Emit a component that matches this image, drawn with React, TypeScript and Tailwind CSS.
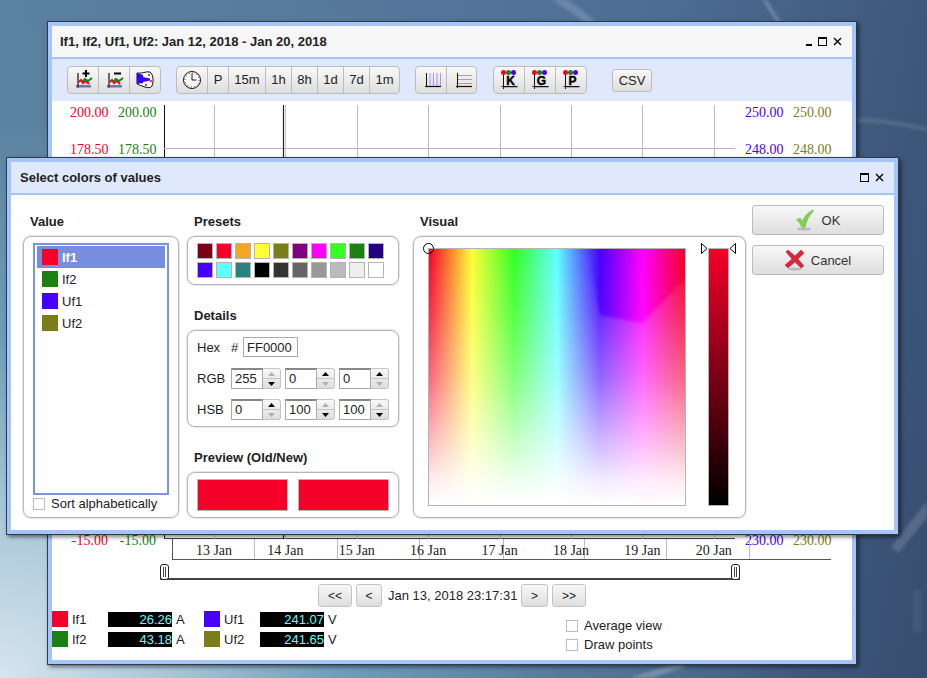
import type { ReactNode } from "react";

const RED = "#f40028";
const GREEN = "#1a8012";
const BLUE = "#4700ff";
const OLIVE = "#7b7e18";

const BTN_BG = "bg-[linear-gradient(#f8f8f8,#dedede)]";

const PRESETS = [
  "#7a0018", "#f40028", "#f5a623", "#ffff33", "#7b7e18", "#800080", "#ff00ff", "#33ff22", "#1a8012", "#240082",
  "#4700ff", "#5fffff", "#2b8080", "#000000", "#333333", "#666666", "#999999", "#bbbbbb", "#eeeeee", "#ffffff",
];

const GRID_X = [50, 193, 264, 336, 407, 478, 550];
const TICKS_X = [82, 165, 247, 331, 412, 494, 577];
const DATES = ["13 Jan", "14 Jan", "15 Jan", "16 Jan", "17 Jan", "18 Jan", "19 Jan", "20 Jan"];

function Axes() {
  return <path d="M5 3v15M3 16h15" stroke="#111" strokeWidth="1.2" fill="none" />;
}

function Zigzag() {
  return (
    <>
      <path d="M3 17h15" stroke="#7a5cff" strokeWidth="1" />
      <path d="M6 12l2-2 2 3 3-2 3 3" stroke={RED} strokeWidth="2" fill="none" />
      <path d="M9 12l3-3 3 2 4-3" stroke={GREEN} strokeWidth="2" fill="none" />
    </>
  );
}

function Icon({ children }: { children: ReactNode }) {
  return (
    <svg width="20" height="20" viewBox="0 0 20 20">
      {children}
    </svg>
  );
}

function ChartPlusIcon() {
  return (
    <Icon>
      <Axes />
      <Zigzag />
      <path d="M13 0v7M9.500 3.500h7" stroke="#000" strokeWidth="2" />
    </Icon>
  );
}

function ChartMinusIcon() {
  return (
    <Icon>
      <Axes />
      <Zigzag />
      <path d="M10 3.500h7" stroke="#000" strokeWidth="2" />
    </Icon>
  );
}

function PaletteIcon() {
  return (
    <Icon>
      <path d="M2 3c5 1 9-2 13-1 3 2 4 9 2 14-1 2-4 2-7 1-3-1-6-2-8-3z" fill="#fff" stroke="#111" strokeWidth="1" />
      <path d="M2 3l6 2v2l7 1.500v2L8 12v1l-6 1z" fill="#3a00ff" />
      <circle cx="14" cy="5" r="1" fill={RED} />
      <circle cx="16" cy="11" r="1" fill={RED} />
      <circle cx="11" cy="15" r="1" fill="#800080" />
    </Icon>
  );
}

function ClockIcon() {
  return (
    <Icon>
      <circle cx="10" cy="10" r="8.500" fill="#fff" stroke="#111" strokeWidth="1" />
      <circle cx="10" cy="10" r="7" fill="none" stroke="#8a0018" strokeWidth="1" strokeDasharray="1 2.670" />
      <path d="M10 3.500V10h4.500" stroke="#111" strokeWidth="1" fill="none" />
    </Icon>
  );
}

function VerticalLinesIcon() {
  return (
    <Icon>
      <path d="M9 3v13M12.500 3v13M16 3v13M19.500 3v13" stroke="#b48cff" strokeWidth="1" />
      <path d="M5.500 3v14" stroke="#111" strokeWidth="1" />
      <path d="M4 16.500h16" stroke="#111" strokeWidth="1.200" />
    </Icon>
  );
}

function HorizontalLinesIcon() {
  return (
    <Icon>
      <path d="M5 5.500h15M5 9.500h15M5 13.500h15" stroke="#b48cff" strokeWidth="1" />
      <path d="M5.500 3v15" stroke="#111" strokeWidth="1" />
      <path d="M4 16.500h16" stroke="#111" strokeWidth="1.200" />
    </Icon>
  );
}

function LetterIcon({ letter }: { letter: string }) {
  return (
    <Icon>
      <path d="M4.500 3v16M2.500 16.500h16" stroke="#111" strokeWidth="1" />
      <path d="M4.500 17.500h14" stroke="#7a5cff" strokeWidth="0.500" />
      <text
        x="11.500"
        y="14.500"
        textAnchor="middle"
        fontSize="12"
        fontWeight="700"
        fill="#000"
        stroke="#000"
        strokeWidth="0.400"
        fontFamily="'Liberation Sans', Arial, sans-serif"
      >
        {letter}
      </text>
      <circle cx="14.500" cy="2.500" r="2.500" fill={BLUE} />
      <circle cx="4.500" cy="2.500" r="2.500" fill={RED} />
      <circle cx="9.500" cy="2.500" r="2.500" fill={GREEN} />
    </Icon>
  );
}

function CheckIcon() {
  return (
    <svg width="18" height="22" viewBox="0 0 18 22">
      <ellipse cx="8" cy="20" rx="7" ry="1.500" fill="#999" opacity="0.600" />
      <path d="M0.500 11l3.500-2 2.500 3.500C8 8 11 4 16.500 1c1 0 1 1 .5 1.500-4 4-6.500 9-7.500 15-1 1-3 1.500-4 .5C5 15 3 13 .5 11z" fill="#7ed04e" stroke="#68b83a" strokeWidth="0.500" />
    </svg>
  );
}

function CrossIcon() {
  return (
    <svg width="20" height="22" viewBox="0 0 20 22">
      <ellipse cx="10" cy="20" rx="7" ry="1.500" fill="#999" opacity="0.600" />
      <path d="M3 1l7 6 6-6 3 3-6 6 6 7-3 2-6-6-7 6-3-3 7-6-6-7z" fill="#d8283f" stroke="#b81d33" strokeWidth="0.500" />
    </svg>
  );
}

function CloseGlyph() {
  return (
    <svg width="9" height="9" viewBox="0 0 9 9">
      <path d="M1 1l7 7M8 1L1 8" stroke="#000" strokeWidth="1.400" />
    </svg>
  );
}

function WindowControls({ minimize }: { minimize?: boolean }) {
  return (
    <div className="flex items-center gap-[6px]">
      {minimize && <div className="mt-[7px] h-[2px] w-[6px] bg-black" />}
      <div className="h-[9px] w-[9px] border border-t-2 border-black" />
      <CloseGlyph />
    </div>
  );
}

function ToolGroup({ items }: { items: { w: number; node: ReactNode }[] }) {
  return (
    <div className={`flex h-[28px] rounded-[4px] border border-[#bcbcbc] ${BTN_BG}`}>
      {items.map((item, i) => (
        <div
          key={i}
          style={{ width: item.w }}
          className="flex items-center justify-center border-r border-[#bcbcbc] last:border-r-0"
        >
          {item.node}
        </div>
      ))}
    </div>
  );
}

function Toolbar() {
  return (
    <div className="flex h-[42px] items-start bg-[#e0e8fc] pt-[7px] pl-[15px]">
      <ToolGroup
        items={[
          { w: 31, node: <ChartPlusIcon /> },
          { w: 31, node: <ChartMinusIcon /> },
          { w: 30, node: <PaletteIcon /> },
        ]}
      />
      <div className="ml-[15px]">
        <ToolGroup
          items={[
            { w: 31, node: <ClockIcon /> },
            { w: 21, node: "P" },
            { w: 37, node: "15m" },
            { w: 26, node: "1h" },
            { w: 26, node: "8h" },
            { w: 26, node: "1d" },
            { w: 26, node: "7d" },
            { w: 29, node: "1m" },
          ]}
        />
      </div>
      <div className="ml-[15px]">
        <ToolGroup
          items={[
            { w: 31, node: <VerticalLinesIcon /> },
            { w: 29, node: <HorizontalLinesIcon /> },
          ]}
        />
      </div>
      <div className="ml-[16px]">
        <ToolGroup
          items={[
            { w: 31, node: <LetterIcon letter="K" /> },
            { w: 31, node: <LetterIcon letter="G" /> },
            { w: 30, node: <LetterIcon letter="P" /> },
          ]}
        />
      </div>
      <div className={`mt-[3px] ml-[25px] flex h-[23px] w-[40px] items-center justify-center rounded-[3px] border border-[#bcbcbc] ${BTN_BG}`}>
        CSV
      </div>
    </div>
  );
}

function ScaleColumn({ color, values }: { color: string; values: string[] }) {
  return (
    <div style={{ color }} className="flex h-[443px] w-[38px] flex-col justify-between pt-px text-right font-['Liberation_Serif',serif] text-[14px] leading-[14px]">
      <div>{values[0]}</div>
      <div className="mt-[23px] mb-auto">{values[1]}</div>
      <div>{values[2]}</div>
    </div>
  );
}

function PlotArea() {
  return (
    <div className="mt-[4px] flex h-[434px]">
      <div className="ml-[18px] flex gap-[10px]">
        <ScaleColumn color={RED} values={["200.00", "178.50", "-15.00"]} />
        <ScaleColumn color={GREEN} values={["200.00", "178.50", "-15.00"]} />
      </div>
      <svg width="572" height="434" className="ml-[8px] shrink-0">
        <path d="M0.500 0V434" stroke="#111" strokeWidth="1" />
        <path d="M0 43.500H571" stroke="#b8b8b8" strokeWidth="1" />
        <path d="M0 433.500H571" stroke="#444" strokeWidth="1" />
        {GRID_X.map((x) => (
          <path key={x} d={`M${x + 0.5} 0V434`} stroke="#bcbcbc" strokeWidth="1" />
        ))}
        <path d="M119.500 0V434" stroke="#222" strokeWidth="1.200" />
        <path d="M121.500 0V434" stroke="#c8c8c8" strokeWidth="1" />
      </svg>
      <div className="ml-[9px] flex gap-[10px]">
        <ScaleColumn color={BLUE} values={["250.00", "248.00", "230.00"]} />
        <ScaleColumn color={OLIVE} values={["250.00", "248.00", "230.00"]} />
      </div>
    </div>
  );
}

function DateAxis() {
  return (
    <svg width="660" height="21" className="ml-[120px] block">
      <path d="M0.500 0V20M0 20.500H659" stroke="#555" strokeWidth="1" />
      {TICKS_X.map((x) => (
        <path key={x} d={`M${x + 0.5} 0V20`} stroke="#bcbcbc" strokeWidth="1" />
      ))}
      {DATES.map((date, i) => (
        <text
          key={date}
          x={42 + i * 71.4}
          y="16"
          textAnchor="middle"
          fontSize="14"
          fill="#222"
          fontFamily="'Liberation Serif', serif"
        >
          {date}
        </text>
      ))}
    </svg>
  );
}

function SliderHandle() {
  return (
    <div className="flex h-[16px] w-[9px] shrink-0 justify-center gap-[1px] rounded-[3px] border border-[#222] bg-white px-[1px] py-[2px]">
      <div className="w-px bg-[#444]" />
      <div className="w-px bg-[#444]" />
    </div>
  );
}

function NavButton({ w, label }: { w: number; label: string }) {
  return (
    <div
      style={{ width: w }}
      className={`flex h-[23px] items-center justify-center rounded-[3px] border border-[#c4c4c4] text-[12px] ${BTN_BG}`}
    >
      {label}
    </div>
  );
}

function LegendItem({ color, name, value, unit }: { color: string; name: string; value: string; unit: string }) {
  return (
    <div className="flex h-[16px] w-[152px] items-center">
      <div style={{ backgroundColor: color }} className="h-[16px] w-[16px]" />
      <div className="ml-[4px] w-[36px] pt-px">{name}</div>
      <div className="h-[15px] w-[64px] bg-black text-right leading-[16px] text-[#5fffff]">{value}</div>
      <div className="ml-[4px] pt-px">{unit}</div>
    </div>
  );
}

function CheckBox({ label }: { label: string }) {
  return (
    <div className="flex h-[12px] items-center gap-[6px]">
      <div className="h-[12px] w-[12px] border border-[#bdbdbd] bg-white" />
      <span className="text-[#222]">{label}</span>
    </div>
  );
}

function MainWindow() {
  return (
    <div className="absolute top-[21px] left-[47px] h-[644px] w-[810px] border border-[#2e3b4a] shadow-[2px_2px_4px_rgba(0,0,0,0.5)]">
      <div className="flex h-full flex-col border-4 border-[#a5c4f7] bg-white">
        <div className="flex h-[31px] items-center justify-between bg-[#f6f6f6] pr-[10px] pl-[8px] font-bold">
          <span>If1, If2, Uf1, Uf2: Jan 12, 2018 - Jan 20, 2018</span>
          <WindowControls minimize />
        </div>
        <div className="h-[2px] bg-[#a5c4f7]" />
        <Toolbar />
        <PlotArea />
        <DateAxis />
        <div className="mt-[4px] ml-[108px] flex h-[16px] w-[580px] items-start justify-between border-b-2 border-[#444]">
          <SliderHandle />
          <SliderHandle />
        </div>
        <div className="mt-[4px] ml-[266px] flex h-[23px] items-center">
          <NavButton w={34} label="<<" />
          <div className="ml-[4px]">
            <NavButton w={26} label="<" />
          </div>
          <span className="ml-[6px] w-[133px]">Jan 13, 2018 23:17:31</span>
          <NavButton w={27} label=">" />
          <div className="ml-[4px]">
            <NavButton w={34} label=">>" />
          </div>
        </div>
        <div className="mt-[4px] flex">
          <div className="flex flex-col gap-[4px]">
            <div className="flex">
              <LegendItem color={RED} name="If1" value="26.26" unit="A" />
              <LegendItem color={BLUE} name="Uf1" value="241.07" unit="V" />
            </div>
            <div className="flex">
              <LegendItem color={GREEN} name="If2" value="43.18" unit="A" />
              <LegendItem color={OLIVE} name="Uf2" value="241.65" unit="V" />
            </div>
          </div>
          <div className="mt-[9px] ml-[210px] flex flex-col gap-[7px]">
            <CheckBox label="Average view" />
            <CheckBox label="Draw points" />
          </div>
        </div>
      </div>
    </div>
  );
}

const PANEL = "rounded-[8px] border border-[#b8b8b8] bg-white shadow-[0_0_0_1px_#e8e8e8]";

function SectionLabel({ children }: { children: ReactNode }) {
  return <div className="mb-[6px] h-[18px] pl-[7px] leading-[20px] font-bold">{children}</div>;
}

function ValueRow({ color, name, selected }: { color: string; name: string; selected?: boolean }) {
  return (
    <div className={`flex h-[22px] w-[128px] items-center pl-[5px] ${selected ? "bg-[#778ee0] font-bold text-white" : ""}`}>
      <div style={{ backgroundColor: color }} className="h-[16px] w-[16px]" />
      <span className="ml-[4px] pt-px">{name}</span>
    </div>
  );
}

function Arrow({ up, active }: { up?: boolean; active: boolean }) {
  return (
    <div className="flex flex-1 items-center justify-center border-[#c4c4c4] first:border-b">
      <svg width="7" height="4" viewBox="0 0 7 4">
        <path d={up ? "M3.500 0L7 4H0z" : "M0 0h7L3.500 4z"} fill={active ? "#000" : "#b0b0b0"} />
      </svg>
    </div>
  );
}

function Spinner({ value, upActive }: { value: string; upActive: boolean }) {
  return (
    <div className="flex h-[21px] w-[50px]">
      <div className="w-[32px] border border-t-2 border-[#aaa] border-t-[#888] bg-white pl-[3px] leading-[18px]">{value}</div>
      <div className={`flex w-[18px] flex-col rounded-r-[3px] border border-l-0 border-[#c4c4c4] ${BTN_BG}`}>
        <Arrow up active={upActive} />
        <Arrow active={!upActive} />
      </div>
    </div>
  );
}

function SpinnerRow({ label, values, ups }: { label: string; values: string[]; ups: boolean[] }) {
  return (
    <div className="flex items-center">
      <span className="w-[34px]">{label}</span>
      <div className="flex gap-[4px]">
        {values.map((value, i) => (
          <Spinner key={i} value={value} upActive={ups[i]} />
        ))}
      </div>
    </div>
  );
}

function ColorField() {
  return (
    <svg width="256" height="256" className="block">
      <defs>
        <linearGradient id="hue" x1="0" x2="256" y1="0" y2="0" gradientUnits="userSpaceOnUse">
          <stop offset="0" stopColor="#f40028" />
          <stop offset="0.167" stopColor="#ffff33" />
          <stop offset="0.333" stopColor="#33ff22" />
          <stop offset="0.500" stopColor="#5fffff" />
          <stop offset="0.667" stopColor="#4700ff" />
          <stop offset="0.833" stopColor="#ff00ff" />
          <stop offset="1" stopColor="#f40028" />
        </linearGradient>
        <linearGradient id="wash" x1="0" x2="0" y1="0" y2="1">
          <stop offset="0" stopColor="#fff" stopOpacity="0" />
          <stop offset="0.250" stopColor="#fff" stopOpacity="0.170" />
          <stop offset="0.500" stopColor="#fff" stopOpacity="0.400" />
          <stop offset="0.750" stopColor="#fff" stopOpacity="0.720" />
          <stop offset="0.900" stopColor="#fff" stopOpacity="0.920" />
          <stop offset="1" stopColor="#fff" stopOpacity="1" />
        </linearGradient>
        <filter id="soft">
          <feGaussianBlur stdDeviation="1.500" />
        </filter>
        <clipPath id="field">
          <rect width="256" height="256" />
        </clipPath>
      </defs>
      <rect width="256" height="256" fill="url(#hue)" />
      <rect width="256" height="256" fill="url(#wash)" />
      <g clipPath="url(#field)">
        <polygon points="160,-6 171,66 213,74 262,24 262,-6" fill="url(#hue)" fillOpacity="0.850" filter="url(#soft)" />
      </g>
    </svg>
  );
}

function ColorDialog() {
  return (
    <div className="absolute top-[157px] left-[6px] h-[378px] w-[893px] border border-[#2e3b4a] shadow-[2px_2px_4px_rgba(0,0,0,0.5)]">
      <div className="flex h-full flex-col border-4 border-[#a5c4f7] bg-white">
        <div className="flex h-[31px] items-center justify-between bg-[#e0e8fc] pr-[10px] pl-[9px] font-bold">
          <span>Select colors of values</span>
          <WindowControls />
        </div>
        <div className="h-[2px] bg-[#a5c4f7]" />
        <div className="flex pl-[12px]">
          <div className="w-[156px] pt-[17px]">
            <SectionLabel>Value</SectionLabel>
            <div className={`${PANEL} h-[282px] pt-[6px] pl-[9px]`}>
              <div className="h-[252px] w-[136px] border-2 border-[#7b93e0] pt-px pl-[2px]">
                <ValueRow color={RED} name="If1" selected />
                <ValueRow color={GREEN} name="If2" />
                <ValueRow color={BLUE} name="Uf1" />
                <ValueRow color={OLIVE} name="Uf2" />
              </div>
              <div className="mt-[3px]">
                <CheckBox label="Sort alphabetically" />
              </div>
            </div>
          </div>
          <div className="ml-[8px] w-[212px] pt-[17px]">
            <SectionLabel>Presets</SectionLabel>
            <div className={`${PANEL} h-[49px] pt-[6px] pl-[9px]`}>
              <div className="grid w-[187px] grid-cols-[repeat(10,16px)] gap-[3px]">
                {PRESETS.map((color) => (
                  <div key={color} style={{ backgroundColor: color }} className="h-[16px] w-[16px] border border-[#b4b4b4]" />
                ))}
              </div>
            </div>
            <div className="mt-[21px]">
              <SectionLabel>Details</SectionLabel>
            </div>
            <div className={`${PANEL} flex h-[97px] flex-col pt-[6px] pl-[9px]`}>
              <div className="flex h-[20px] items-center leading-[20px]">
                <span className="w-[34px] pt-px">Hex</span>
                <span className="w-[12px] pt-px">#</span>
                <div className="h-[20px] w-[55px] border border-[#aaa] pl-[3px] leading-[19px]">FF0000</div>
              </div>
              <div className="mt-[11px]">
                <SpinnerRow label="RGB" values={["255", "0", "0"]} ups={[false, true, true]} />
              </div>
              <div className="mt-[10px]">
                <SpinnerRow label="HSB" values={["0", "100", "100"]} ups={[true, false, false]} />
              </div>
            </div>
            <div className="mt-[21px]">
              <SectionLabel>Preview (Old/New)</SectionLabel>
            </div>
            <div className={`${PANEL} flex h-[46px] gap-[10px] pt-[6px] pl-[9px]`}>
              <div className="h-[32px] w-[91px] border border-[#b4b4b4] bg-[#f40028]" />
              <div className="h-[32px] w-[91px] border border-[#b4b4b4] bg-[#f40028]" />
            </div>
          </div>
          <div className="ml-[14px] w-[333px] pt-[17px]">
            <SectionLabel>Visual</SectionLabel>
            <div className={`${PANEL} flex h-[282px] pt-[11px] pl-[14px]`}>
              <div className="relative h-[258px] w-[258px] border border-[#b4b4b4]">
                <ColorField />
                <div className="absolute -top-[6px] -left-[6px] h-[11px] w-[11px] rounded-full border border-black" />
              </div>
              <div className="relative ml-[22px] h-[258px] w-[21px] border border-[#b4b4b4] bg-[linear-gradient(#f40028,#000)]">
                <svg width="7" height="11" viewBox="0 0 7 11" className="absolute -top-[6px] -left-[8px]">
                  <path d="M0.500 0.500L6 5.500 0.500 10.500z" fill="#fff" stroke="#000" />
                </svg>
                <svg width="7" height="11" viewBox="0 0 7 11" className="absolute -top-[6px] -right-[8px]">
                  <path d="M6.500 0.500L1 5.500l5.500 5z" fill="#fff" stroke="#000" />
                </svg>
              </div>
            </div>
          </div>
          <div className="ml-[6px] flex w-[132px] flex-col gap-[10px] pt-[10px] text-[#333]">
            <div className={`flex h-[30px] items-center justify-center gap-[8px] rounded-[3px] border border-[#bcbcbc] ${BTN_BG}`}>
              <CheckIcon />
              <span className="pt-px">OK</span>
            </div>
            <div className={`flex h-[30px] items-center justify-center gap-[6px] rounded-[3px] border border-[#bcbcbc] ${BTN_BG}`}>
              <CrossIcon />
              <span className="pt-px">Cancel</span>
            </div>
          </div>
        </div>
      </div>
    </div>
  );
}

function Wallpaper() {
  return (
    <svg width="927" height="678" className="absolute inset-0 blur-[1.5px]">
      <g fill="none" stroke="#fff">
        <path d="M553 -4C565 3 580 12 592 24" strokeWidth="8" opacity="0.160" />
        <path d="M762 -4L780 24" strokeWidth="4" opacity="0.220" />
        <path d="M852 120C880 120 905 124 930 130" strokeWidth="4" opacity="0.120" />
        <path d="M895 550L930 505" strokeWidth="10" opacity="0.150" />
        <path d="M917 590V632" strokeWidth="8" opacity="0.060" />
        <path d="M628 682L684 664" strokeWidth="7" opacity="0.220" />
      </g>
    </svg>
  );
}

export default function App() {
  return (
    <div className="relative h-[678px] w-[927px] overflow-hidden bg-[radial-gradient(circle_at_0%_100%,#d6e5ee_0,#a8c6d8_170px,#6f9db8_340px,rgba(91,131,160,0.6)_560px,transparent_800px),linear-gradient(100deg,#5b80a0,#4f7096_60%,#374d70)] font-['Liberation_Sans',Arial,sans-serif] text-[13px] text-[#222]">
      <Wallpaper />
      <MainWindow />
      <ColorDialog />
    </div>
  );
}
